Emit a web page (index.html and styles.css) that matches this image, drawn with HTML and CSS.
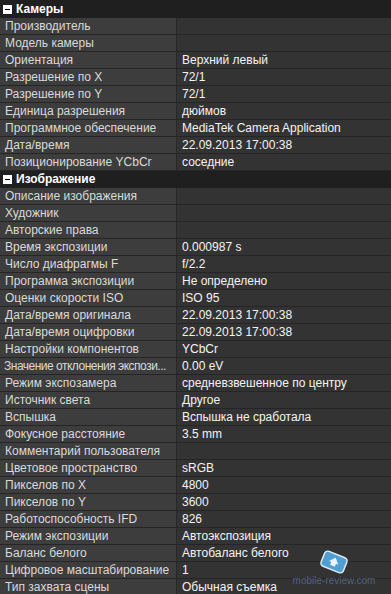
FILE: index.html
```html
<!DOCTYPE html>
<html lang="ru">
<head>
<meta charset="utf-8">
<link rel="stylesheet" href="styles.css">
</head>
<body>
<div class="grid">
  <div class="head first"><span class="box"></span>Камеры</div>
  <div class="row"><div class="k">Производитель</div><div class="v"></div></div>
  <div class="row"><div class="k">Модель камеры</div><div class="v"></div></div>
  <div class="row"><div class="k">Ориентация</div><div class="v">Верхний левый</div></div>
  <div class="row"><div class="k">Разрешение по X</div><div class="v">72/1</div></div>
  <div class="row"><div class="k">Разрешение по Y</div><div class="v">72/1</div></div>
  <div class="row"><div class="k">Единица разрешения</div><div class="v">дюймов</div></div>
  <div class="row"><div class="k">Программное обеспечение</div><div class="v">MediaTek Camera Application</div></div>
  <div class="row"><div class="k">Дата/время</div><div class="v">22.09.2013 17:00:38</div></div>
  <div class="row"><div class="k">Позиционирование YCbCr</div><div class="v">соседние</div></div>
  <div class="head"><span class="box"></span>Изображение</div>
  <div class="row"><div class="k">Описание изображения</div><div class="v"></div></div>
  <div class="row"><div class="k">Художник</div><div class="v"></div></div>
  <div class="row"><div class="k">Авторские права</div><div class="v"></div></div>
  <div class="row"><div class="k">Время экспозиции</div><div class="v">0.000987 s</div></div>
  <div class="row"><div class="k">Число диафрагмы F</div><div class="v">f/2.2</div></div>
  <div class="row"><div class="k">Программа экспозиции</div><div class="v">Не определено</div></div>
  <div class="row"><div class="k">Оценки скорости ISO</div><div class="v">ISO 95</div></div>
  <div class="row"><div class="k">Дата/время оригинала</div><div class="v">22.09.2013 17:00:38</div></div>
  <div class="row"><div class="k">Дата/время оцифровки</div><div class="v">22.09.2013 17:00:38</div></div>
  <div class="row"><div class="k">Настройки компонентов</div><div class="v">YCbCr</div></div>
  <div class="row"><div class="k tight">Значение отклонения экспози...</div><div class="v">0.00 eV</div></div>
  <div class="row"><div class="k">Режим экспозамера</div><div class="v">средневзвешенное по центру</div></div>
  <div class="row"><div class="k">Источник света</div><div class="v">Другое</div></div>
  <div class="row"><div class="k">Вспышка</div><div class="v">Вспышка не сработала</div></div>
  <div class="row"><div class="k">Фокусное расстояние</div><div class="v">3.5 mm</div></div>
  <div class="row"><div class="k">Комментарий пользователя</div><div class="v"></div></div>
  <div class="row"><div class="k">Цветовое пространство</div><div class="v">sRGB</div></div>
  <div class="row"><div class="k">Пикселов по X</div><div class="v">4800</div></div>
  <div class="row"><div class="k">Пикселов по Y</div><div class="v">3600</div></div>
  <div class="row"><div class="k">Работоспособность IFD</div><div class="v">826</div></div>
  <div class="row"><div class="k">Режим экспозиции</div><div class="v">Автоэкспозиция</div></div>
  <div class="row"><div class="k">Баланс белого</div><div class="v">Автобаланс белого</div></div>
  <div class="row"><div class="k">Цифровое масштабирование</div><div class="v">1</div></div>
  <div class="row"><div class="k">Тип захвата сцены</div><div class="v">Обычная съемка</div></div>
</div>
<div class="mark">
  <svg width="34" height="26" viewBox="0 0 34 26">
    <g transform="rotate(22 17 13)">
      <rect x="5" y="5" width="24" height="16" rx="3.5" fill="#4f9fd2" stroke="#dfeaf2" stroke-width="1.5"/>
      <path d="M12 14 L17 8.5 L22 14 L19.5 14 L19.5 17 L14.5 17 L14.5 14 Z" fill="#eef5fa"/>
    </g>
  </svg>
  <div class="mtext">mobile-review.com</div>
</div>
</body>
</html>
```
FILE: styles.css
```css
html, body {
  margin: 0;
  padding: 0;
  background: #333333;
}
body {
  width: 391px;
  height: 594px;
  overflow: hidden;
  position: relative;
  font-family: "Liberation Sans", Arial, sans-serif;
  font-size: 12px;
}
.grid {
  display: flex;
  flex-direction: column;
}
.head {
  height: 17px;
  background: #1f1f1f;
  color: #ffffff;
  font-weight: bold;
  display: flex;
  align-items: center;
  gap: 4px;
  padding-left: 3px;
  box-sizing: border-box;
  line-height: 17px;
  flex: none;
}
.head.first {
  height: 18px;
}
.box {
  width: 9px;
  height: 9px;
  background: #ffffff;
  position: relative;
  flex: none;
}
.box::after {
  content: "";
  position: absolute;
  left: 2px;
  top: 4px;
  width: 5px;
  height: 1px;
  background: #000;
}
.row {
  height: 17px;
  flex: none;
  display: grid;
  grid-template-columns: 177px 1fr;
  box-sizing: border-box;
  border-bottom: 1px solid #252525;
}
.k {
  background: #3d3d3d;
  color: #dadada;
  padding-left: 5px;
  border-right: 1px solid #282828;
  line-height: 16px;
  white-space: nowrap;
  overflow: hidden;
}
.k.tight {
  letter-spacing: -0.5px;
  padding-left: 4px;
}
.v {
  background: #333333;
  color: #f4f4f4;
  padding-left: 5px;
  line-height: 16px;
  white-space: nowrap;
  overflow: hidden;
}
.mark {
  position: absolute;
  left: 284px;
  top: 549px;
  width: 100px;
  display: flex;
  flex-direction: column;
  align-items: center;
}
.mtext {
  font-size: 10px;
  line-height: 10px;
  white-space: nowrap;
  color: rgba(110, 130, 175, 0.6);
  margin-top: 1px;
}
```
